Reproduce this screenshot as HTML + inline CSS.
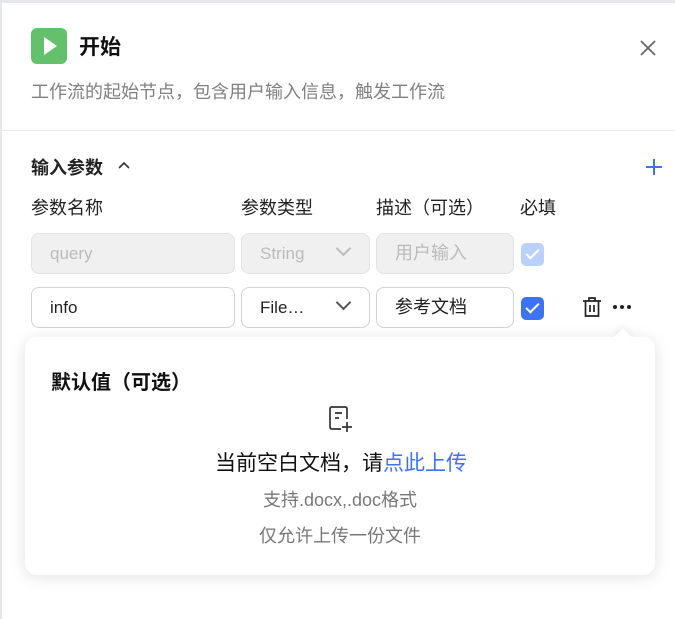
<html><head><style>
body{margin:0;width:675px;height:619px;background:#fff;font-family:"Liberation Sans","Noto Sans CJK SC",sans-serif;position:relative;overflow:hidden}
.a{position:absolute}
.in{position:absolute;box-sizing:border-box;border:1px solid #d0d3d9;border-radius:8px;height:41px;font-size:17px;line-height:39px;padding-left:18px;color:#222}
.dis{background:#f0f0f0;border-color:#e2e2e2;color:#bbb}
.chev{position:absolute;right:20px;width:9px;height:9px;border-right:2px solid #555;border-bottom:2px solid #555;transform:rotate(45deg);top:9px}
.cb{position:absolute;width:23px;height:23px;border-radius:5px}
.cb:after{content:"";position:absolute;left:8px;top:3px;width:5px;height:11px;border-right:2px solid #fff;border-bottom:2px solid #fff;transform:rotate(45deg)}
</style></head><body>
<div class="a" style="left:0;top:0;width:675px;height:3px;background:#e5e7eb"></div>
<div class="a" style="left:0;top:3px;width:2px;height:616px;background:#e5e7eb"></div>
<div class="a" style="left:31px;top:28px;width:36px;height:36px;background:#63c06b;border-radius:6px"></div>
<div class="a" style="left:44px;top:37px;width:0;height:0;border-left:13px solid #fff;border-top:9px solid transparent;border-bottom:9px solid transparent"></div>
<div class="a" style="left:79px;top:31px;font-size:21px;font-weight:bold;color:#111">开始</div>
<svg class="a" style="left:639px;top:39px" width="18" height="18"><path d="M2 2L16 16M16 2L2 16" stroke="#666" stroke-width="1.8"/></svg>
<div class="a" style="left:31px;top:78px;font-size:18px;color:#808080">工作流的起始节点，包含用户输入信息，触发工作流</div>
<div class="a" style="left:2px;top:130px;width:673px;height:1px;background:#e8e8ec"></div>
<div class="a" style="left:31px;top:154px;font-size:18px;font-weight:bold;color:#222">输入参数</div>
<svg class="a" style="left:117px;top:159px" width="14" height="12"><path d="M2 9L7 4L12 9" stroke="#333" stroke-width="1.6" fill="none"/></svg>
<svg class="a" style="left:645px;top:158px" width="18" height="18"><path d="M9 1V17M1 9H17" stroke="#3b73f3" stroke-width="2"/></svg>
<div class="a" style="left:31px;top:194px;font-size:18px;color:#222">参数名称</div>
<div class="a" style="left:241px;top:194px;font-size:18px;color:#222">参数类型</div>
<div class="a" style="left:376px;top:194px;font-size:18px;color:#222">描述（可选）</div>
<div class="a" style="left:520px;top:194px;font-size:18px;color:#222">必填</div>
<div class="in dis" style="left:31px;top:233px;width:204px">query</div>
<div class="in dis" style="left:241px;top:233px;width:129px">String<div class="chev" style="border-color:#bbb"></div></div>
<div class="in dis" style="left:376px;top:233px;width:138px;font-size:18px">用户输入</div>
<div class="cb" style="left:521px;top:243px;background:#b9d1fb"></div>
<div class="in" style="left:31px;top:287px;width:204px">info</div>
<div class="in" style="left:241px;top:287px;width:129px">File…<div class="chev"></div></div>
<div class="in" style="left:376px;top:287px;width:138px;font-size:18px">参考文档</div>
<div class="cb" style="left:521px;top:297px;background:#3b73f3"></div>
<svg class="a" style="left:582px;top:296px" width="20" height="22"><path d="M1 5H19M7 5V2H13V5M3.5 5V20H16.5V5M8 9V16M12 9V16" stroke="#222" stroke-width="1.7" fill="none"/></svg>
<svg class="a" style="left:612px;top:304px" width="20" height="6"><circle cx="3" cy="3" r="2" fill="#222"/><circle cx="10" cy="3" r="2" fill="#222"/><circle cx="17" cy="3" r="2" fill="#222"/></svg>
<div class="a" style="left:25px;top:337px;width:630px;height:238px;background:#fff;border-radius:12px;box-shadow:0 2px 16px rgba(0,0,0,.12)"></div>
<div class="a" style="left:616px;top:331px;width:14px;height:14px;background:#fff;transform:rotate(45deg);box-shadow:-3px -3px 6px rgba(0,0,0,.05)"></div>
<div class="a" style="left:51px;top:366px;font-size:20px;font-weight:bold;color:#111">默认值（可选）</div>
<svg class="a" style="left:328px;top:406px" width="26" height="28"><path d="M13 23H4Q2 23 2 21V3Q2 1 4 1H17Q19 1 19 3V13M7 7H14M7 12H11M19 16V26M14 21H24" stroke="#333" stroke-width="1.7" fill="none"/></svg>
<div class="a" style="left:215px;top:447px;font-size:21px;color:#111;white-space:nowrap">当前空白文档，请<span style="color:#3b73f3">点此上传</span></div>
<div class="a" style="left:0;width:680px;text-align:center;top:486px;font-size:18px;color:#777">支持.docx,.doc格式</div>
<div class="a" style="left:0;width:680px;text-align:center;top:522px;font-size:18px;color:#777">仅允许上传一份文件</div>
</body></html>
